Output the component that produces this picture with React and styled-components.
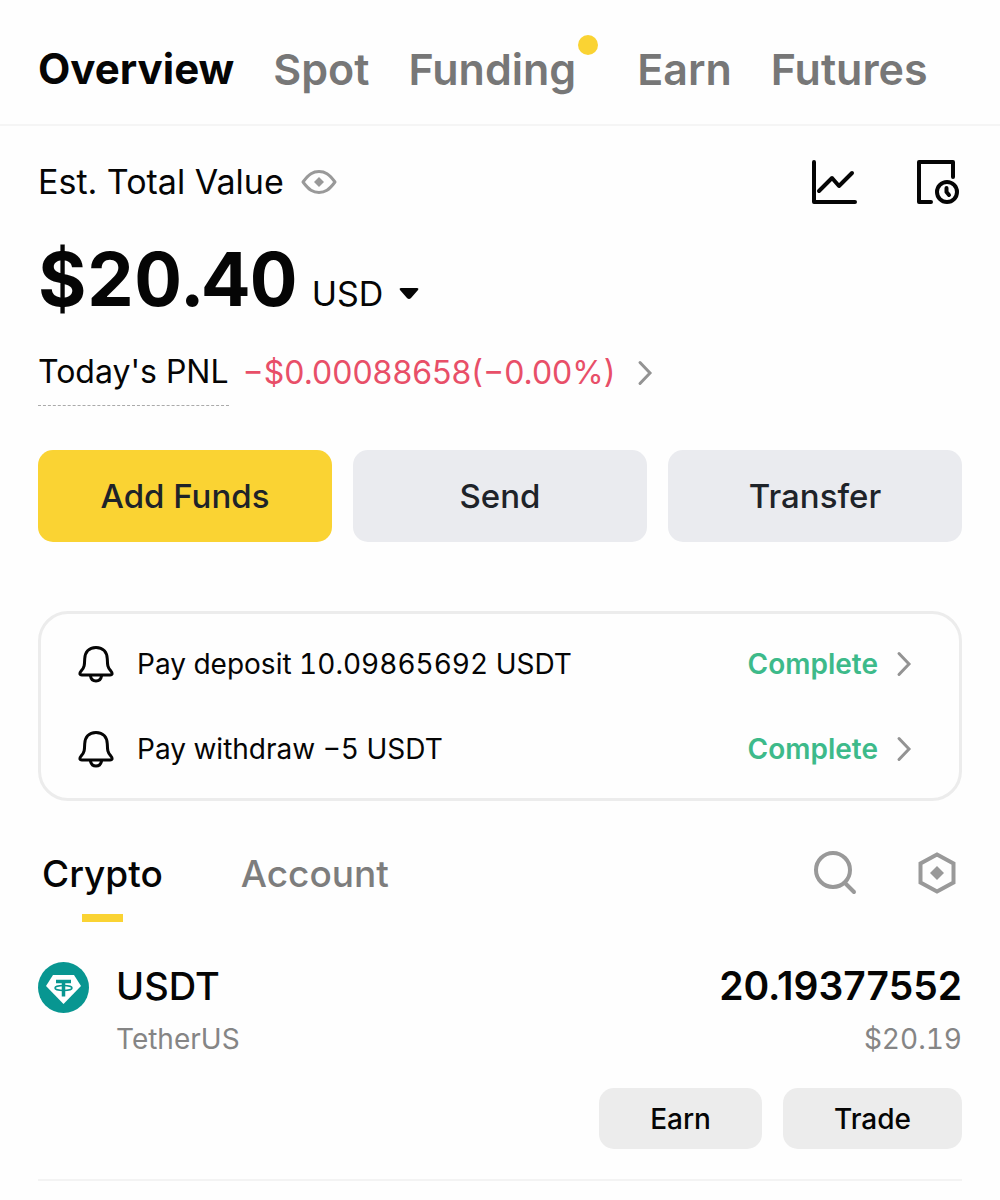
import styled, { createGlobalStyle } from "styled-components";

const GlobalStyle = createGlobalStyle`
    *, *::before, *::after {
        box-sizing: border-box;
    }
    body {
        margin: 0;
        background-color: #fefefe;
        color: #050505;
        font-family: Inter, "Liberation Sans", sans-serif;
    }
    button {
        border: 0;
        padding: 0;
        background: none;
        color: inherit;
        font-family: inherit;
        cursor: pointer;
    }
    h1, h2, p, ul {
        margin: 0;
        padding: 0;
        font-weight: 400;
    }
    svg {
        display: block;
        flex-shrink: 0;
    }
`

const Nav = styled.nav`
    display: flex;
    align-items: center;
    gap: 39px;
    height: 126px;
    padding: 14px 38px 0;
    border-bottom: 2px solid #f5f5f5;
`
const NavTab = styled.button`
    display: flex;
    gap: 2px;
    color: ${(p) => (p.$active ? "#050505" : "#777777")};
    font-size: ${(p) => (p.$active ? 42 : 43)}px;
    font-weight: ${(p) => (p.$active ? 700 : 600)};
    line-height: 52px;
`
const Dot = styled.span`
    width: 20px;
    height: 20px;
    margin-top: -8px;
    border-radius: 50%;
    background-color: #fad333;
`

const Main = styled.main`
    padding: 32px 38px 0;
`
const Row = styled.div`
    display: flex;
    align-items: center;
    justify-content: space-between;
    padding-right: 2px;
`
const Group = styled.div`
    display: flex;
    align-items: center;
    gap: ${(p) => p.$gap}px;
`
const Label = styled.h2`
    font-size: 34px;
    line-height: 48px;
`
const Amount = styled.div`
    display: flex;
    align-items: baseline;
    margin-top: 25px;
    gap: 14px;
`
const Total = styled.h1`
    font-size: 74px;
    font-weight: 700;
    font-variant-numeric: tabular-nums;
    line-height: 96px;
`
const Currency = styled.button`
    display: flex;
    align-items: center;
    gap: 16px;
    font-size: 34px;
    line-height: 44px;
`
const Pnl = styled.div`
    display: flex;
    align-items: center;
    margin-top: 13px;
`
const PnlLabel = styled.span`
    padding: 10px 0 11px;
    border-bottom: 1px dashed #aaaaaa;
    font-size: 32px;
    line-height: 44px;
`
const PnlValue = styled.span`
    margin: 0 22px 0 14px;
    color: #e84f68;
    font-size: 32px;
    line-height: 44px;
`
const Actions = styled.div`
    display: grid;
    grid-template-columns: repeat(3, 1fr);
    gap: 21px;
    margin-top: 44px;
`
const Action = styled.button`
    height: 92px;
    border-radius: 15px;
    background-color: ${(p) => (p.$primary ? "#fad333" : "#eaebef")};
    color: #1e2329;
    font-size: 33px;
    font-weight: 500;
`

const Notices = styled.ul`
    margin-top: 69px;
    padding: 7px 47px 7px 37px;
    border: 3px solid #ececec;
    border-radius: 30px;
    list-style: none;
`
const Notice = styled.li`
    display: flex;
    align-items: center;
    height: 85px;
    font-size: 28px;
`
const NoticeText = styled.p`
    flex: 1;
    margin-left: 23px;
    font-variant-numeric: tabular-nums;
`
const Status = styled.button`
    display: flex;
    align-items: center;
    gap: 18px;
    color: #3dba8a;
    font-size: 28px;
    font-weight: 600;
`

const ListTabs = styled(Group)`
    padding-left: 4px;
`
const ListTab = styled.button`
    display: flex;
    flex-direction: column;
    align-items: center;
    color: ${(p) => (p.$active ? "#050505" : "#7d7d7d")};
    font-size: 37px;
    font-weight: 500;
    line-height: 48px;

    &::after {
        content: "";
        width: 41px;
        height: 8px;
        margin-top: 16px;
        background-color: ${(p) => (p.$active ? "#fad333" : "transparent")};
    }
`
const ListHead = styled(Row)`
    align-items: flex-start;
    margin-top: 49px;
    padding-right: 6px;
`
const Asset = styled.article`
    padding-bottom: 30px;
    border-bottom: 2px solid #f3f3f3;
`
const AssetRow = styled.div`
    display: flex;
    align-items: flex-start;
    margin-top: 38px;
`
const Coin = styled.div`
    margin-top: 2px;
`
const Cell = styled.div`
    flex: ${(p) => (p.$end ? "none" : 1)};
    margin-left: 27px;
    text-align: ${(p) => (p.$end ? "right" : "left")};
`
const Big = styled.p`
    font-size: ${(p) => (p.$strong ? 39 : 38)}px;
    font-weight: ${(p) => (p.$strong ? 600 : 500)};
    line-height: 52px;
`
const Small = styled.p`
    margin-top: 3px;
    color: #858585;
    font-size: 28px;
    font-variant-numeric: tabular-nums;
    line-height: 48px;
`
const AssetActions = styled.div`
    display: flex;
    justify-content: flex-end;
    gap: 21px;
    margin-top: 25px;
`
const SmallButton = styled.button`
    height: 61px;
    padding: 0 51px;
    border-radius: 15px;
    background-color: #ececec;
    font-size: 28px;
    font-weight: 500;
`

const IconButton = styled.button`
    display: flex;
`

function Eye() {
    return (
        <svg width="36" height="26" viewBox="0 0 36 26" fill="none" stroke="#999" strokeWidth="3">
            <path d="M2 13C8 5 12 2.500 18 2.500S28 5 34 13C28 21 24 23.500 18 23.500S8 21 2 13Z" strokeLinejoin="round" />
            <path d="M18 8l5 5-5 5-5-5Z" fill="#999" stroke="none" />
        </svg>
    )
}

function Chart() {
    return (
        <svg width="46" height="46" viewBox="0 0 46 46" fill="none" stroke="#050505" strokeWidth="4" strokeLinecap="round" strokeLinejoin="round">
            <path d="M3 3v40h41" />
            <path d="M8 32l13-13 7 8 13-13" />
        </svg>
    )
}

function History() {
    return (
        <svg width="44" height="46" viewBox="0 0 44 46" fill="none" stroke="#050505" strokeWidth="4" strokeLinecap="round" strokeLinejoin="round">
            <path d="M37 18V3H3v40h12" />
            <circle cx="31" cy="33" r="10" />
            <path d="M30.500 29v4l2.500 3" />
        </svg>
    )
}

function Bell() {
    return (
        <svg width="36" height="38" viewBox="0 0 36 38" fill="none" stroke="#050505" strokeWidth="3" strokeLinecap="round" strokeLinejoin="round">
            <path d="M18 2.500C10.500 2.500 7 7.500 6.700 14C6.500 20 6.500 22 3.500 25.500C1 28.500 1.500 30 4 30H32C34.500 30 35 28.500 32.500 25.500C29.500 22 29.500 20 29.300 14C29 7.500 25.500 2.500 18 2.500Z" />
            <path d="M12.500 31c.5 3 2.500 5 5.500 5s5-2 5.500-5" />
        </svg>
    )
}

function Chevron() {
    return (
        <svg width="16" height="26" viewBox="0 0 16 26" fill="none" stroke="#939393" strokeWidth="3" strokeLinecap="round">
            <path d="M3 2.500L13 13L3 23.500" />
        </svg>
    )
}

function Search() {
    return (
        <svg width="46" height="46" viewBox="0 0 46 46" fill="none" stroke="#999" strokeWidth="4" strokeLinecap="round">
            <circle cx="20" cy="20" r="17" />
            <path d="M32 33l9 9" />
        </svg>
    )
}

function Settings() {
    return (
        <svg width="38" height="44" viewBox="0 0 38 44" fill="none" stroke="#999" strokeWidth="4">
            <path d="M19 3.500l16.500 9v19L19 40.500l-16.500-9v-19Z" />
            <path d="M19 15l7 7-7 7-7-7Z" fill="#999" stroke="none" />
        </svg>
    )
}

function Tether() {
    return (
        <svg width="51" height="51" viewBox="0 0 51 51">
            <circle cx="25.500" cy="25.500" r="25.500" fill="#089691" />
            <path d="M15 13h21l7 11-17.500 18L8 24Z" fill="#fff" />
            <path d="M18 19.500h15M25.500 19.500v15" fill="none" stroke="#089691" strokeWidth="3.500" />
            <ellipse cx="25.500" cy="26" rx="8.500" ry="2.500" fill="none" stroke="#089691" strokeWidth="1.500" />
        </svg>
    )
}

const tabs = ["Overview", "Spot", "Funding", "Earn", "Futures"];
const notices = ["Pay deposit 10.09865692 USDT", "Pay withdraw \u22125 USDT"];

export default function App() {
    return (
        <>
            <GlobalStyle />
            <Nav>
                {tabs.map((tab) => (
                    <NavTab key={tab} $active={tab === "Overview"}>
                        {tab}
                        {tab === "Funding" && <Dot />}
                    </NavTab>
                ))}
            </Nav>
            <Main>
                <Row>
                    <Group $gap={17}>
                        <Label>Est. Total Value</Label>
                        <IconButton aria-label="Hide balance"><Eye /></IconButton>
                    </Group>
                    <Group $gap={59}>
                        <IconButton aria-label="Analysis"><Chart /></IconButton>
                        <IconButton aria-label="History"><History /></IconButton>
                    </Group>
                </Row>
                <Amount>
                    <Total>$20.40</Total>
                    <Currency>
                        USD
                        <svg width="20" height="14" viewBox="0 0 20 14"><path d="M2 1h16q2 0 1 2l-7 8q-2 2-4 0L1 3q-1-2 1-2Z" fill="#050505" /></svg>
                    </Currency>
                </Amount>
                <Pnl>
                    <PnlLabel>Today's PNL</PnlLabel>
                    <PnlValue>{"\u2212$0.00088658(\u22120.00%)"}</PnlValue>
                    <IconButton aria-label="PNL details"><Chevron /></IconButton>
                </Pnl>
                <Actions>
                    <Action $primary>Add Funds</Action>
                    <Action>Send</Action>
                    <Action>Transfer</Action>
                </Actions>
                <Notices>
                    {notices.map((text) => (
                        <Notice key={text}>
                            <Bell />
                            <NoticeText>{text}</NoticeText>
                            <Status>Complete<Chevron /></Status>
                        </Notice>
                    ))}
                </Notices>
                <ListHead>
                    <ListTabs $gap={78}>
                        <ListTab $active>Crypto</ListTab>
                        <ListTab>Account</ListTab>
                    </ListTabs>
                    <Group $gap={59}>
                        <IconButton aria-label="Search"><Search /></IconButton>
                        <IconButton aria-label="Settings"><Settings /></IconButton>
                    </Group>
                </ListHead>
                <Asset>
                    <AssetRow>
                        <Coin><Tether /></Coin>
                        <Cell>
                            <Big>USDT</Big>
                            <Small>TetherUS</Small>
                        </Cell>
                        <Cell $end>
                            <Big $strong>20.19377552</Big>
                            <Small>$20.19</Small>
                        </Cell>
                    </AssetRow>
                    <AssetActions>
                        <SmallButton>Earn</SmallButton>
                        <SmallButton>Trade</SmallButton>
                    </AssetActions>
                </Asset>
            </Main>
        </>
    )
}
